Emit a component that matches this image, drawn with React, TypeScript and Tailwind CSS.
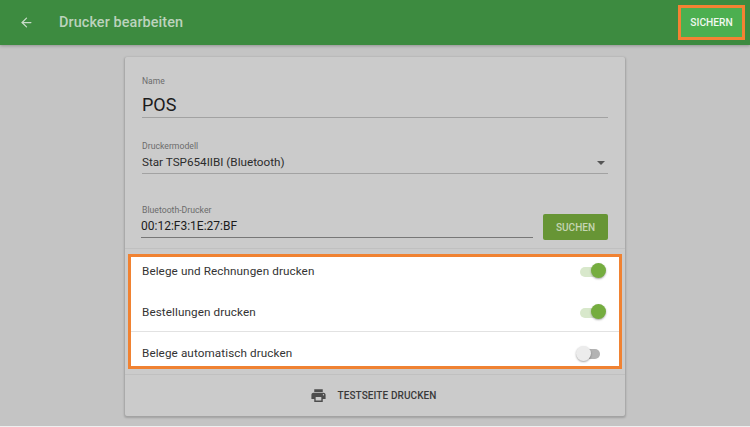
import { ArrowLeft } from 'lucide-react'

function Toggle({ on }: { on: boolean }) {
  if (on) {
    return (
      <div className="relative w-[26px] h-[17px] mr-[1px] flex items-center">
        <div className="w-[24px] h-[10px] rounded-full bg-[#d8e8cb]" />
        <div className="absolute right-0 top-0 w-[15px] h-[15px] rounded-full bg-[#75ad3f] shadow-[0_1px_2px_rgba(0,0,0,0.35)]" />
      </div>
    )
  }
  return (
    <div className="relative w-[24px] h-[17px] mr-[7px] flex items-center justify-end">
      <div className="w-[20px] h-[10px] rounded-full bg-[#b3b3b3]" />
      <div className="absolute left-0 top-0 w-[15px] h-[15px] rounded-full bg-[#ececec] shadow-[0_1px_2px_rgba(0,0,0,0.35)]" />
    </div>
  )
}

function OptionRow({ label, on, className }: { label: string; on: boolean; className: string }) {
  return (
    <div className={`flex items-center justify-between pl-[11px] pr-[12px] ${className}`}>
      <span className="text-[11.7px] text-[#333333] tracking-[0.1px]">{label}</span>
      <Toggle on={on} />
    </div>
  )
}

export default function App() {
  return (
    <div className="h-[427px] w-[750px] overflow-hidden bg-[#f0f0f0] font-['Roboto',sans-serif]">
      <div className="h-[426px] bg-[#c4c4c4]">
        <header className="h-[45px] bg-[#3d8b40] flex items-center justify-between pl-[19px] pr-[5px] shadow-[0_1px_3px_rgba(0,0,0,0.25)]">
          <div className="flex items-center">
            <ArrowLeft size={15} strokeWidth={2} className="text-[#c9dcc9]" />
            <span className="ml-[25px] text-[14.4px] tracking-[0.1px] font-medium text-[#bcd3bd]">Drucker bearbeiten</span>
          </div>
          <button className="w-[67px] h-[35px] border-[3px] border-[#f58233] bg-[#4caf50] text-[10.2px] font-medium text-[#f1f8f1] flex items-center justify-center">
            SICHERN
          </button>
        </header>

        <main className="w-[500px] mx-auto mt-[12px] h-[359px] bg-[#cbcbcb] rounded-[2px] shadow-[0_1px_2px_1px_rgba(0,0,0,0.18)] flex flex-col">
          <div className="px-[17px] pt-[19px] h-[192px] border-b border-[#c0c0c0]">
            <div className="text-[8.5px] leading-[10px] text-[#6c6c6c]">Name</div>
            <div className="mt-[8px] h-[24px] border-b border-[#a2a2a2] text-[18px] leading-[22px] text-[#1c1c1c]">POS</div>

            <div className="mt-[23px] text-[8.7px] leading-[10px] text-[#6c6c6c]">Druckermodell</div>
            <div className="mt-[1px] h-[22px] border-b border-[#a2a2a2] flex items-center justify-between pr-[3px]">
              <span className="text-[11.7px] text-[#2c2c2c]">Star TSP654IIBI (Bluetooth)</span>
              <span className="w-0 h-0 border-x-[4px] border-x-transparent border-t-[4px] border-t-[#555555]" />
            </div>

            <div className="mt-[31px] flex items-end gap-[10px]">
              <div className="flex-1">
                <div className="text-[8.7px] leading-[10px] text-[#6c6c6c]">Bluetooth-Drucker</div>
                <div className="-ml-[1px] h-[23px] border-b border-[#777777] text-[12px] leading-[22px] text-[#1c1c1c]">00:12:F3:1E:27:BF</div>
              </div>
              <button className="w-[65px] h-[26px] -mb-[2px] rounded-[2px] bg-[#679535] text-[10px] font-medium text-[#c6d6b4]">SUCHEN</button>
            </div>
          </div>

          <div className="mx-[3px] mt-[5px] h-[115px] border-[3px] border-[#f08232] bg-white flex flex-col">
            <OptionRow label="Belege und Rechnungen drucken" on className="h-[28px] pt-[1px]" />
            <OptionRow label="Bestellungen drucken" on className="h-[46px] pt-[9px]" />
            <OptionRow label="Belege automatisch drucken" on={false} className="h-[35px] pt-[10px] border-t border-[#e2e2e2]" />
          </div>

          <div className="mt-[5px] flex-1 border-t border-[#c0c0c0] flex items-center justify-center gap-[10px] pr-[3px]">
            <svg viewBox="0 0 24 24" className="w-[17px] h-[17px] fill-[#4d4d4d]">
              <path d="M19 8H5c-1.66 0-3 1.34-3 3v6h4v4h12v-4h4v-6c0-1.66-1.34-3-3-3zm-3 11H8v-5h8v5zm3-7c-.55 0-1-.45-1-1s.45-1 1-1 1 .45 1 1-.45 1-1 1zm-1-9H6v4h12V3z" />
            </svg>
            <span className="text-[10px] font-medium text-[#3a3a3a] tracking-[0.1px]">TESTSEITE DRUCKEN</span>
          </div>
        </main>
      </div>
    </div>
  )
}
